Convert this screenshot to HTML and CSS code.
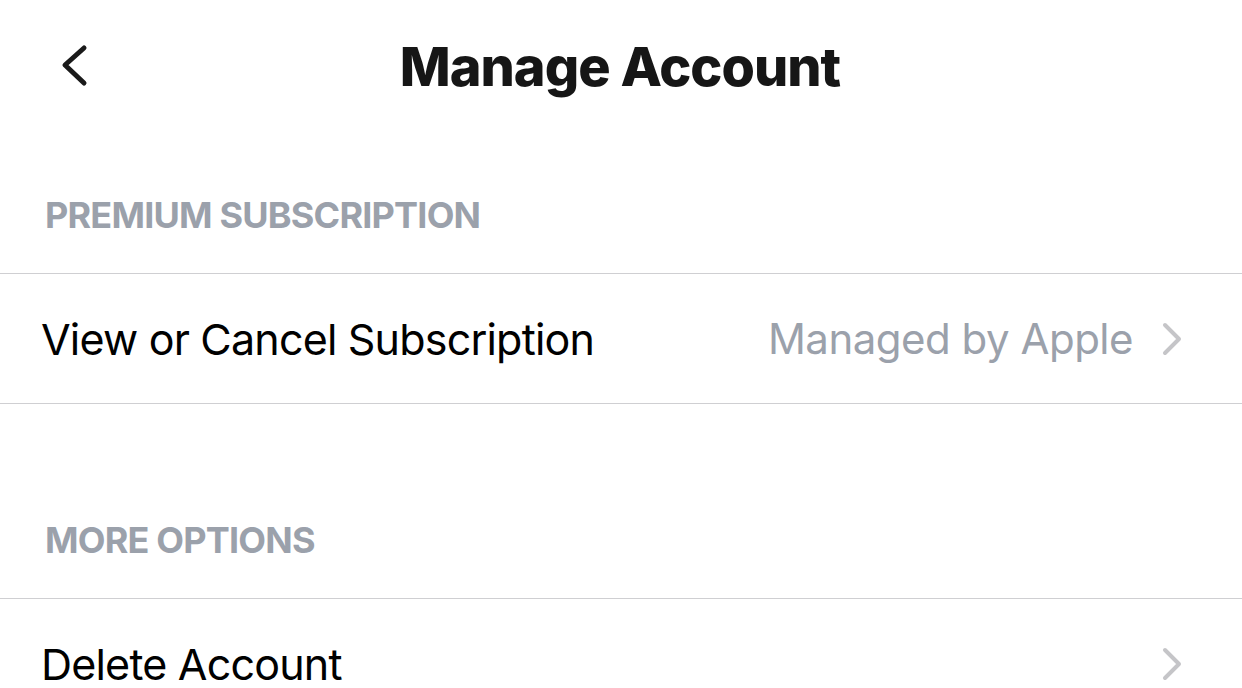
FILE: index.html
```html
<!DOCTYPE html>
<html>
<head>
<meta charset="utf-8">
<link rel="stylesheet" href="styles.css">
</head>
<body>
<div class="screen">
  <header class="nav">
    <button class="back" aria-label="Back">
      <svg width="28" height="44" viewBox="0 0 28 44"><path d="M24 4 L5 21 L24 39" fill="none" stroke="#1a1a1a" stroke-width="5" stroke-linecap="round" stroke-linejoin="round"/></svg>
    </button>
    <h1 class="title">Manage Account</h1>
  </header>

  <section class="group">
    <div class="group-label">PREMIUM SUBSCRIPTION</div>
    <div class="row">
      <span class="row-title">View or Cancel Subscription</span>
      <span class="row-detail">Managed by Apple</span>
      <svg class="chev" width="20" height="34" viewBox="0 0 20 34"><path d="M3 3 L17 17 L3 31" fill="none" stroke="#c5c5c8" stroke-width="4" stroke-linecap="round" stroke-linejoin="round"/></svg>
    </div>
  </section>

  <section class="group second">
    <div class="group-label">MORE OPTIONS</div>
    <div class="row">
      <span class="row-title">Delete Account</span>
      <svg class="chev" width="20" height="34" viewBox="0 0 20 34"><path d="M3 3 L17 17 L3 31" fill="none" stroke="#c5c5c8" stroke-width="4" stroke-linecap="round" stroke-linejoin="round"/></svg>
    </div>
  </section>
</div>
</body>
</html>
```

FILE: styles.css
```css
* { box-sizing: border-box; }
html, body { margin: 0; padding: 0; background: #ffffff; }
body { font-family: Inter, "Liberation Sans", sans-serif; color: #000; overflow: hidden; }
.screen { width: 1242px; height: 688px; overflow: hidden; }

.nav {
  height: 132px;
  display: flex;
  align-items: center;
  justify-content: center;
  position: relative;
}
.back {
  position: absolute;
  left: 60px;
  top: 44px;
  padding: 0;
  border: 0;
  background: none;
  display: flex;
}
.title {
  margin: 0;
  font-size: 54px;
  font-weight: 800;
  letter-spacing: -1px;
  color: #161616;
  line-height: 1;
  padding-top: 2px;
  padding-right: 2px;
}

.group-label {
  padding: 59px 0 34px 45px;
  line-height: 48px;
  font-size: 36px;
  font-weight: 700;
  color: #9ba1ab;
  letter-spacing: -0.8px;
  border-bottom: 1px solid #cfcfd2;
}
.group.second { margin-top: 53px; }

.row {
  height: 130px;
  display: flex;
  align-items: center;
  padding: 0 60px 0 41px;
  border-bottom: 1px solid #cfcfd2;
}
.row-title {
  font-size: 43px;
  font-weight: 400;
  color: #000;
  flex: 1;
  letter-spacing: -0.8px;
}
.row-detail {
  font-size: 42px;
  color: #9ba1ab;
  margin-right: 29px;
  letter-spacing: -0.5px;
}
.chev { display: block; }
```
